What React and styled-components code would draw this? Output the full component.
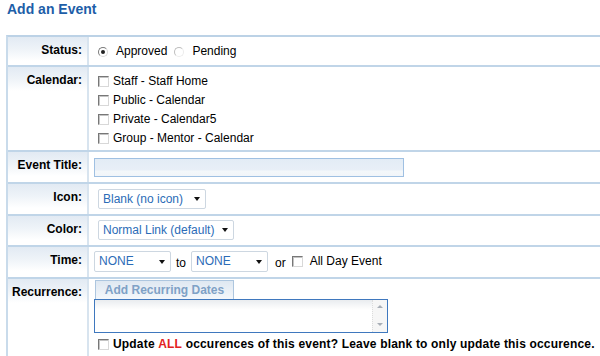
import styled, { createGlobalStyle } from "styled-components";

const GlobalStyle = createGlobalStyle`
  body {
    margin: 0;
    background: #fff;
    font-family: "Liberation Sans", Arial, sans-serif;
    font-size: 12px;
    color: #000;
  }
`;

const Page = styled.div`
  padding-left: 6px;
`;

const Title = styled.h2`
  margin: 0 0 0 1px;
  height: 35px;
  font-size: 14px;
  line-height: 18px;
  color: #1d5ea8;
`;

const Form = styled.div`
  border-left: 2px solid #c9dbeb;
  border-top: 2px solid #bcd2e6;
`;

const Row = styled.div`
  display: grid;
  grid-template-columns: 81px 1fr;
  border-bottom: 2px solid #c0d5e8;
`;

const Label = styled.div`
  padding: 6px 5px 0 0;
  text-align: right;
  font-weight: bold;
  line-height: 15px;
  border-right: 2px solid #d8e4ef;
  background: linear-gradient(to bottom, #e2eaf3 0, #eef3f8 12px, #fff 24px);
`;

const Cell = styled.div`
  padding: ${(p) => p.$pad || "5px 5px"};
  line-height: 15px;
`;

const Line = styled.div`
  display: flex;
  align-items: center;
  height: ${(p) => p.$h || 15}px;
`;

const Option = styled.label`
  display: inline-flex;
  align-items: center;
  margin-left: 4px;
  margin-right: ${(p) => p.$mr || 0}px;
  font-weight: ${(p) => (p.$bold ? "bold" : "normal")};
  letter-spacing: ${(p) => (p.$bold ? "0.18px" : "normal")};
  white-space: nowrap;
`;

const Radio = styled.span`
  position: relative;
  width: 8px;
  height: 8px;
  border-radius: 50%;
  border: 1px solid;
  border-color: ${(p) =>
    p.$on ? "#7b7b7b #d9d9d9 #d9d9d9 #7b7b7b" : "#bdbdbd #ececec #ececec #bdbdbd"};
  margin-right: 8px;
  &::after {
    content: "";
    display: ${(p) => (p.$on ? "block" : "none")};
    position: absolute;
    left: 2px;
    top: 2px;
    width: 4px;
    height: 4px;
    border-radius: 50%;
    background: #222;
  }
`;

const Check = styled.span`
  flex: none;
  width: 9px;
  height: 9px;
  border: 1px solid;
  border-color: #777 #d8d8d8 #d8d8d8 #777;
  box-shadow: inset 1px 1px 0 #c4c4c4;
  background: #fff;
  margin-right: ${(p) => p.$mr || 4}px;
`;

const TextInput = styled.div`
  width: 308px;
  height: 17px;
  border: 1px solid #9fc0e2;
  background: linear-gradient(to bottom, #e3ecf5 0, #e8eff7 11px, #f3f7fa 12px, #f1f5f9 100%);
`;

const Select = styled.div`
  display: inline-flex;
  align-items: center;
  justify-content: space-between;
  box-sizing: border-box;
  width: ${(p) => p.$w}px;
  height: ${(p) => p.$h || 20}px;
  margin-left: ${(p) => p.$ml || 0}px;
  padding: 0 5px 0 4px;
  border: 1px solid #cdd7e1;
  border-radius: 2px;
  background: #fff;
  color: #2b6cb7;
  white-space: nowrap;
  &::after {
    content: "";
    border-left: 3.5px solid transparent;
    border-right: 3.5px solid transparent;
    border-top: 4px solid #111;
  }
`;

const Word = styled.span`
  margin: 3px ${(p) => p.$mr || 4}px 0 ${(p) => p.$ml || 4}px;
`;

const Tab = styled.div`
  width: 137px;
  height: 18px;
  margin-left: 1px;
  border: 1px solid #adc6df;
  border-bottom: none;
  background: linear-gradient(to bottom, #dfe8f2 0, #f4f7fb 100%);
  color: #7ea1c6;
  font-weight: bold;
  text-align: center;
  line-height: 19px;
`;

const TextArea = styled.div`
  display: flex;
  width: 292px;
  height: 32px;
  border: 1px solid #3f78be;
  background: linear-gradient(to bottom, #e9ecef 0, #f7f8f9 6px, #fff 10px);
`;

const TextSpace = styled.div`
  flex: 1;
`;

const Scroll = styled.div`
  display: flex;
  flex-direction: column;
  justify-content: space-between;
  align-items: center;
  width: 14px;
  padding: 5px 0 6px;
  border-left: 1px dotted #dcdcdc;
  background: #f6f6f6;
`;

const Arrow = styled.span`
  border-left: 3px solid transparent;
  border-right: 3px solid transparent;
  ${(p) => (p.$up ? "border-bottom" : "border-top")}: 3px solid #a8aeb6;
`;

const Red = styled.span`
  color: #e32222;
`;

const calendars = [
  "Staff - Staff Home",
  "Public - Calendar",
  "Private - Calendar5",
  "Group - Mentor - Calendar",
];

export default function App() {
  return (
    <Page>
      <GlobalStyle />
      <Title>Add an Event</Title>
      <Form>
        <Row>
          <Label>Status:</Label>
          <Cell $pad="7px 5px 6px">
            <Line>
              <Option $mr={3}>
                <Radio $on />
                Approved
              </Option>
              <Option>
                <Radio />
                Pending
              </Option>
            </Line>
          </Cell>
        </Row>

        <Row>
          <Label>Calendar:</Label>
          <Cell $pad="5px 5px 2px">
            {calendars.map((c) => (
              <Line key={c} $h={19}>
                <Option>
                  <Check />
                  {c}
                </Option>
              </Line>
            ))}
          </Cell>
        </Row>

        <Row>
          <Label>Event Title:</Label>
          <Cell $pad="6px 5px 5px">
            <TextInput />
          </Cell>
        </Row>

        <Row>
          <Label>Icon:</Label>
          <Cell $pad="5px 5px 5px">
            <Select $w={108} $ml={4}>
              Blank (no icon)
            </Select>
          </Cell>
        </Row>

        <Row>
          <Label>Color:</Label>
          <Cell $pad="4px 5px 5px">
            <Select $w={136} $ml={4}>
              Normal Link (default)
            </Select>
          </Cell>
        </Row>

        <Row>
          <Label>Time:</Label>
          <Cell $pad="4px 5px 5px">
            <Line $h={21}>
              <Select $w={77} $h={21}>
                NONE
              </Select>
              <Word $ml={5} $mr={5}>
                to
              </Word>
              <Select $w={77} $h={21}>
                NONE
              </Select>
              <Word $ml={7} $mr={2}>
                or
              </Word>
              <Option>
                <Check $mr={7} />
                All Day Event
              </Option>
            </Line>
          </Cell>
        </Row>

        <Row>
          <Label>Recurrence:</Label>
          <Cell $pad="1px 5px 8px">
            <Tab>Add Recurring Dates</Tab>
            <TextArea>
              <TextSpace />
              <Scroll>
                <Arrow $up />
                <Arrow />
              </Scroll>
            </TextArea>
            <Line $h={23}>
              <Option $bold>
                <Check />
                Update&nbsp;<Red>ALL</Red>&nbsp;occurences of this event? Leave
                blank to only update this occurence.
              </Option>
            </Line>
          </Cell>
        </Row>
      </Form>
    </Page>
  );
}
